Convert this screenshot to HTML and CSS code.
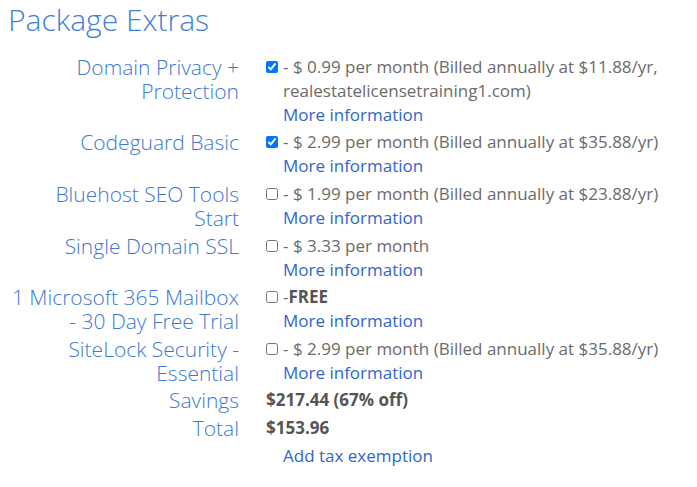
FILE: index.html
```html
<!DOCTYPE html>
<html>
<head>
<meta charset="utf-8">
<link rel="stylesheet" href="styles.css">
</head>
<body>
<h2 class="title">Package Extras</h2>
<div class="extras">
  <div class="label">Domain Privacy +<br>Protection</div>
  <div class="value"><div class="line"><input type="checkbox" checked> <span>- $ 0.99 per month (Billed annually at $11.88/yr,<br>realestatelicensetraining1.com)</span></div><a class="link">More information</a></div>

  <div class="label">Codeguard Basic</div>
  <div class="value"><div class="line"><input type="checkbox" checked> <span>- $ 2.99 per month (Billed annually at $35.88/yr)</span></div><a class="link">More information</a></div>

  <div class="label">Bluehost SEO Tools<br>Start</div>
  <div class="value"><div class="line"><input type="checkbox"> <span>- $ 1.99 per month (Billed annually at $23.88/yr)</span></div><a class="link">More information</a></div>

  <div class="label">Single Domain SSL</div>
  <div class="value"><div class="line"><input type="checkbox"> <span>- $ 3.33 per month</span></div><a class="link">More information</a></div>

  <div class="label">1 Microsoft 365 Mailbox<br>- 30 Day Free Trial</div>
  <div class="value"><div class="line"><input type="checkbox"> <span>-<b>FREE</b></span></div><a class="link">More information</a></div>

  <div class="label">SiteLock Security -<br>Essential</div>
  <div class="value"><div class="line"><input type="checkbox"> <span>- $ 2.99 per month (Billed annually at $35.88/yr)</span></div><a class="link">More information</a></div>

  <div class="label">Savings</div>
  <div class="value"><b>$217.44 (67% off)</b></div>

  <div class="label">Total</div>
  <div class="value"><b>$153.96</b></div>

  <div class="label"></div>
  <div class="value"><a class="link">Add tax exemption</a></div>
</div>
</body>
</html>
```

FILE: styles.css
```css
html, body {
  margin: 0;
  padding: 0;
  background: #fff;
}
body {
  font-family: "Open Sans", "Liberation Sans", sans-serif;
  padding: 0 8px;
}
.title {
  margin: 0;
  font-size: 30px;
  font-weight: 300;
  line-height: 40px;
  color: #3f80d8;
}
.extras {
  margin-top: 13px;
  display: grid;
  grid-template-columns: 231px 1fr;
  column-gap: 27px;
}
.label, .value {
  padding: 1.8px 0;
  line-height: 24px;
}
.label {
  text-align: right;
  font-size: 21px;
  font-weight: 300;
  color: #3a79d3;
}
.value {
  font-size: 17px;
  color: #6b6b6b;
}
.line {
  display: flex;
  align-items: flex-start;
}
.line input {
  width: 12px;
  height: 12px;
  margin: 6px 5px 0 0;
  flex: none;
}
.link {
  display: block;
  padding-left: 17px;
  color: #2f66cc;
}
b {
  font-weight: 700;
  color: #555;
}
.value > b {
  display: block;
}
```
